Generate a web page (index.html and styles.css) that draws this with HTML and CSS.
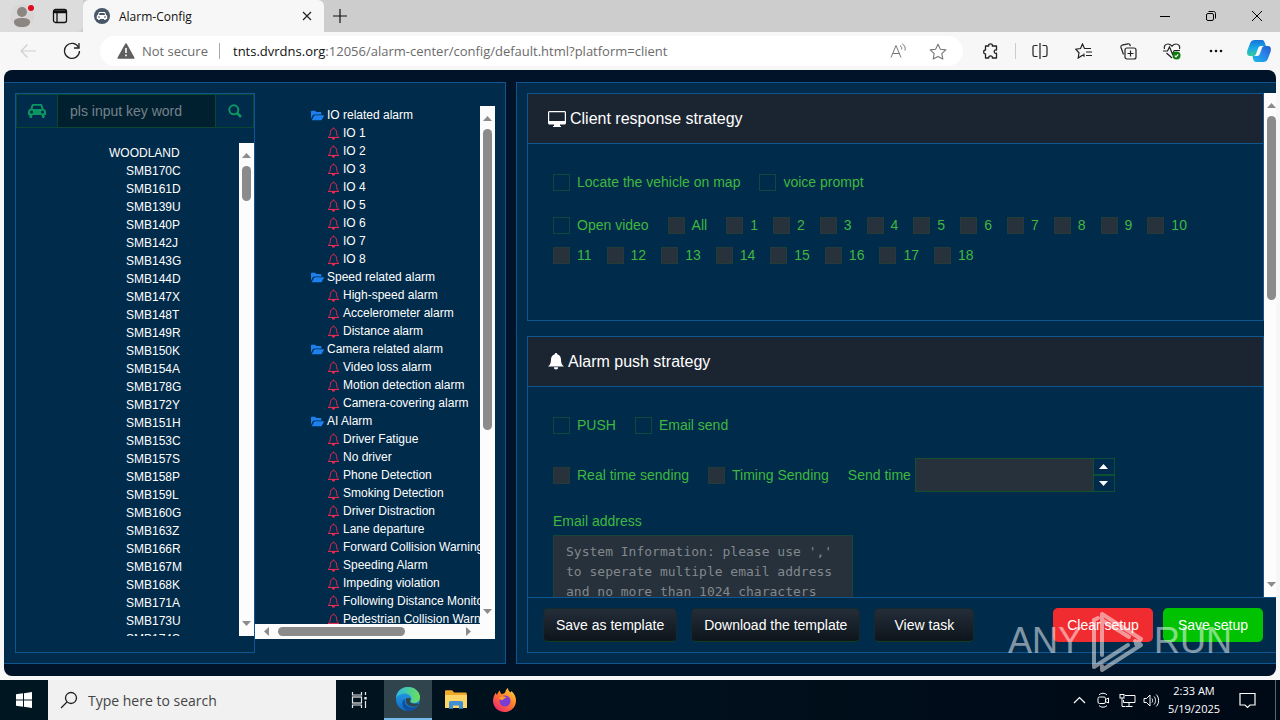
FILE: index.html
```html
<!DOCTYPE html>
<html lang="en">
<head>
  <meta charset="UTF-8">
  <meta name="viewport" content="width=device-width, initial-scale=1.0">
  <title>Alarm-Config</title>
  <link rel="stylesheet" href="styles.css">
</head>
<body>
  <!-- shared icons -->
  <svg class="sprite" width="0" height="0">
    <symbol id="bell" viewBox="0 0 13 13"><path d="M1.2 10.4h10.6c-1.7-1.2-2-2.7-2.2-5C9.400 3.100 8.300 1.700 6.500 1.700S3.600 3.100 3.400 5.400c-.2 2.300-.5 3.800-2.200 5z" fill="none" stroke="currentColor"/><path d="M6.500.4v1.200M1 10.500h11" stroke="currentColor" stroke-width="1.200"/><path d="M4.800 11h3.400a1.700 1.700 0 0 1-3.400 0z" fill="currentColor"/></symbol>
    <symbol id="folder" viewBox="0 0 14 12"><path d="M0 9.500V1.800C0 1.200.5.800 1 .8h3.500l1.200 1.500h4.500c.6 0 1 .4 1 1v1.500H3.600c-.7 0-1.300.3-1.700.9z" fill="currentColor"/><path d="M.8 11 3.200 6.400c.2-.4.5-.6 1-.6h9.300c.4 0 .6.300.4.700l-2.100 3.900c-.2.400-.5.600-1 .6z" fill="currentColor"/></symbol>
    <symbol id="up" viewBox="0 0 9 5"><path d="M4.500 0 9 5H0z" fill="currentColor"/></symbol>
    <symbol id="down" viewBox="0 0 9 5"><path d="M4.500 5 9 0H0z" fill="currentColor"/></symbol>
  </svg>

  <header class="browser">
    <div class="tab-strip">
      <div class="strip-left">
        <button class="avatar" aria-label="Profile">
          <svg width="24" height="24" viewBox="0 0 24 24"><circle cx="12" cy="12" r="12" fill="#d9d7d5"/><circle cx="12" cy="8" r="5" fill="#8b8682"/><path d="M4 18c0-3 3-4 8-4s8 1 8 4-3 5-8 5-8-2-8-5z" fill="#8b8682"/></svg>
          <span class="dot"></span>
        </button>
        <button aria-label="Tab actions">
          <svg width="16" height="16" viewBox="0 0 16 16" fill="none" stroke="#111" stroke-width="1.300"><rect x="1.500" y="1.500" width="13" height="13" rx="2"/><path d="M1.500 3h13M1.500 4.500h13M5 5v9.500"/></svg>
        </button>
      </div>
      <div class="tab">
        <svg width="16" height="16" viewBox="0 0 16 16"><circle cx="8" cy="8" r="8" fill="#485768"/><path d="M5 4h6l1.200 3 1 .8v3.200h-1.400v1h-1.600v-1H5.800v1H4.200v-1H2.800V7.800l1-.8z" fill="#fff"/><path d="M5.600 5h4.800l.7 2H4.900z" fill="#485768"/><path d="M4 9h2M10 9h2" stroke="#485768"/></svg>
        <span class="tab-title">Alarm-Config</span>
        <button class="tab-close" aria-label="Close tab"><svg width="10" height="10" viewBox="0 0 10 10" stroke="#222" stroke-width="1.200"><path d="m1 1 8 8M9 1 1 9"/></svg></button>
      </div>
      <button class="new-tab" aria-label="New tab"><svg width="14" height="14" viewBox="0 0 14 14" stroke="#111" stroke-width="1.200"><path d="M7 0v14M0 7h14"/></svg></button>
      <div class="window-controls">
        <button aria-label="Minimize"><svg width="12" height="12" viewBox="0 0 12 12" stroke="#000"><path d="M1 6.500h10"/></svg></button>
        <button aria-label="Restore"><svg width="12" height="12" viewBox="0 0 12 12" fill="none" stroke="#000"><rect x="1.500" y="3.500" width="7" height="7" rx="1.500"/><path d="M3.500 1.500h5c1.300 0 2 .7 2 2v5"/></svg></button>
        <button aria-label="Close"><svg width="12" height="12" viewBox="0 0 12 12" stroke="#000"><path d="m1 1 10 10M11 1 1 11"/></svg></button>
      </div>
    </div>

    <div class="toolbar">
      <button class="tool" aria-label="Back"><svg width="18" height="16" viewBox="0 0 18 16" fill="none" stroke="#cfcfcf" stroke-width="1.200"><path d="M17 8H2M8.500 1.500 2 8l6.500 6.500"/></svg></button>
      <button class="tool" aria-label="Refresh"><svg width="18" height="18" viewBox="0 0 18 18" fill="none" stroke="#222" stroke-width="1.300"><path d="M15.700 5.500A7.500 7.500 0 1 0 16.500 9"/><path d="M16 1v5h-5"/></svg></button>
      <div class="address">
        <svg width="18" height="16" viewBox="0 0 18 16"><path d="M8.200.8c.4-.7 1.200-.7 1.600 0l7.600 13.600c.4.700 0 1.400-.8 1.400H1.400c-.8 0-1.200-.7-.8-1.400z" fill="#5f5f5f"/><path d="M9 5v5M9 11.500v1.800" stroke="#fff" stroke-width="1.600"/></svg>
        <span class="not-secure">Not secure</span>
        <span class="url"><b>tnts.dvrdns.org</b>:12056/alarm-center/config/default.html?platform=client</span>
        <button class="in-address" aria-label="Read aloud"><svg width="17" height="16" viewBox="0 0 17 16" fill="none" stroke="#777"><path d="m1 14.500 5-12 5 12M2.800 10.500h6.400M10 2.500c1.500 1 2 2.500 1.600 4M12.200.8c2.500 1.500 3.500 4 2.800 6.700"/></svg></button>
        <button class="in-address" aria-label="Add to favorites"><svg width="18" height="17" viewBox="0 0 18 17" fill="none" stroke="#777" stroke-width="1.100"><path d="m9 1.200 2.400 5 5.400.7-4 3.800 1 5.300L9 13.400 4.200 16l1-5.300-4-3.800 5.400-.7z" stroke-linejoin="round"/></svg></button>
      </div>
      <button class="tool" aria-label="Extensions"><svg width="16" height="17" viewBox="0 0 16 17" fill="none" stroke="#222" stroke-width="1.300" stroke-linejoin="round"><path d="M2.500 3h3.200C5.300 1.500 6.500.8 7.500.8s2.200.7 1.800 2.200h4.200v4c-1.500-.4-2.300.5-2.300 1.600s.8 2 2.300 1.600V15H9.300c.4-1.200-.6-2.200-1.700-2.200S5.400 13.800 5.800 15H2.500v-4.200C1.200 11 .7 9.900.7 8.900S1.200 6.800 2.500 7z"/></svg></button>
      <span class="tool-divider"></span>
      <button class="tool" aria-label="Split screen"><svg width="16" height="16" viewBox="0 0 16 16" fill="none" stroke="#222" stroke-width="1.200"><path d="M5.500 2.500H2.700c-1 0-1.700.7-1.700 1.700v7.600c0 1 .7 1.700 1.700 1.700h2.800M8 0v16M10.500 2.500h2.800c1 0 1.700.7 1.700 1.700v7.600c0 1-.7 1.700-1.700 1.700h-2.800"/></svg></button>
      <button class="tool" aria-label="Favorites"><svg width="18" height="16" viewBox="0 0 18 16" fill="none" stroke="#222" stroke-width="1.200"><path d="M9 10.500V13l-1.500-.8L3.200 15 4 9.800.8 6.200l4.700-.7L7.500 1l2 4.500H16M11 9h6M11 12.500h6"/></svg></button>
      <button class="tool" aria-label="Collections"><svg width="17" height="17" viewBox="0 0 17 17" fill="none" stroke="#222" stroke-width="1.200"><rect x="5" y="5" width="11" height="11" rx="2"/><path d="M10.500 7.500v6M7.500 10.500h6M3.500 11.500 1 4.500C.7 3.300 1 2.500 2 2.200L8 .8c1-.2 1.800.3 2 1.200l.3 1.200"/></svg></button>
      <button class="tool" aria-label="Browser essentials"><svg width="18" height="17" viewBox="0 0 18 17" fill="none" stroke="#222" stroke-width="1.200"><path d="M1.500 6C.5 3 2.500 1 5 1c2 0 3 1 4 2.200C10 2 11 1 13 1c2.500 0 4.500 2 3.500 5M3.500 10 9 15"/><path d="M0 8h4.500l2-4 3 7 1.800-3.500H17"/><circle cx="13.500" cy="12.500" r="4" fill="#107c10" stroke="none"/><path d="m11.800 12.600 1.200 1.200 2.200-2.400" stroke="#fff"/></svg></button>
      <button class="tool" aria-label="Settings and more"><svg width="14" height="4" viewBox="0 0 14 4" fill="#111"><circle cx="2" cy="2" r="1.300"/><circle cx="7" cy="2" r="1.300"/><circle cx="12" cy="2" r="1.300"/></svg></button>
      <button class="tool" aria-label="Copilot"><svg width="24" height="22" viewBox="0 0 24 22">
        <defs>
          <linearGradient id="cp1" x1="0" y1="0" x2="0" y2="1"><stop offset="0" stop-color="#1673d8"/><stop offset=".5" stop-color="#18a8e6"/><stop offset="1" stop-color="#35c9a0"/></linearGradient>
          <linearGradient id="cp2" x1="0" y1="1" x2="1" y2="0"><stop offset="0" stop-color="#19bde9"/><stop offset=".6" stop-color="#2a7fe8"/><stop offset="1" stop-color="#205cc8"/></linearGradient>
        </defs>
        <path d="M8 0h7c2 0 2.500 2 3 3.500L19 6h-5c-2 0-2.500 1-3 2.500L9 14c-.5 1.500-1.500 2-3 2H3c-3 0-3.400-3-2.500-6L3 3.500C3.800 1 5.500 0 8 0z" fill="url(#cp1)"/>
        <path d="M16 22H9c-2 0-2.500-2-3-3.500L5.500 16H10c2 0 2.500-1 3-2.500L15 8c.5-1.500 1.500-2 3-2h3c3 0 3.400 3 2.500 6L21 18.500C20.200 21 18.500 22 16 22z" fill="url(#cp2)"/>
      </svg></button>
    </div>
  </header>

  <main class="page">
    <section class="panel vehicles-panel">
      <div class="vehicle-box">
        <form class="search">
          <span class="search-icon"><svg width="18" height="14" viewBox="0 0 18 14"><path d="M5 0h8c.7 0 1.200.4 1.400 1l1.200 4C17 5.300 18 6.300 18 7.700V11h-1.300v1.500c0 2-3 2-3 0V11H4.300v1.500c0 2-3 2-3 0V11H0V7.700C0 6.300 1 5.300 2.400 5l1.200-4C3.800.4 4.300 0 5 0zm.4 1.800L4.500 5h9l-.9-3.200zM3.500 6.500a1.500 1.500 0 1 0 0 3 1.500 1.500 0 0 0 0-3zm11 0a1.500 1.500 0 1 0 0 3 1.500 1.500 0 0 0 0-3z" fill="currentColor" fill-rule="evenodd"/></svg></span>
          <input type="text" placeholder="pls input key word" aria-label="Key word">
          <button type="button" aria-label="Search"><svg width="14" height="14" viewBox="0 0 14 14" fill="none" stroke="currentColor"><circle cx="5.800" cy="5.800" r="4.500" stroke-width="2"/><path d="m9 9 4 4" stroke-width="2.600"/></svg></button>
        </form>
        <div class="vehicle-scroll">
          <ul class="vehicle-list">
            <li class="fleet">WOODLAND</li>
            <li>SMB170C</li>
            <li>SMB161D</li>
            <li>SMB139U</li>
            <li>SMB140P</li>
            <li>SMB142J</li>
            <li>SMB143G</li>
            <li>SMB144D</li>
            <li>SMB147X</li>
            <li>SMB148T</li>
            <li>SMB149R</li>
            <li>SMB150K</li>
            <li>SMB154A</li>
            <li>SMB178G</li>
            <li>SMB172Y</li>
            <li>SMB151H</li>
            <li>SMB153C</li>
            <li>SMB157S</li>
            <li>SMB158P</li>
            <li>SMB159L</li>
            <li>SMB160G</li>
            <li>SMB163Z</li>
            <li>SMB166R</li>
            <li>SMB167M</li>
            <li>SMB168K</li>
            <li>SMB171A</li>
            <li>SMB173U</li>
            <li>SMB174S</li>
          </ul>
          <div class="scrollbar"><svg class="arrow"><use href="#up"/></svg><div class="track"><div class="thumb thumb-vehicles"></div></div><svg class="arrow"><use href="#down"/></svg></div>
        </div>
      </div>

      <div class="alarm-tree">
        <div class="tree-view">
          <ul class="tree">
            <li><svg class="folder"><use href="#folder"/></svg>IO related alarm
              <ul>
                <li><svg class="bell"><use href="#bell"/></svg>IO 1</li>
                <li><svg class="bell"><use href="#bell"/></svg>IO 2</li>
                <li><svg class="bell"><use href="#bell"/></svg>IO 3</li>
                <li><svg class="bell"><use href="#bell"/></svg>IO 4</li>
                <li><svg class="bell"><use href="#bell"/></svg>IO 5</li>
                <li><svg class="bell"><use href="#bell"/></svg>IO 6</li>
                <li><svg class="bell"><use href="#bell"/></svg>IO 7</li>
                <li><svg class="bell"><use href="#bell"/></svg>IO 8</li>
              </ul>
            </li>
            <li><svg class="folder"><use href="#folder"/></svg>Speed related alarm
              <ul>
                <li><svg class="bell"><use href="#bell"/></svg>High-speed alarm</li>
                <li><svg class="bell"><use href="#bell"/></svg>Accelerometer alarm</li>
                <li><svg class="bell"><use href="#bell"/></svg>Distance alarm</li>
              </ul>
            </li>
            <li><svg class="folder"><use href="#folder"/></svg>Camera related alarm
              <ul>
                <li><svg class="bell"><use href="#bell"/></svg>Video loss alarm</li>
                <li><svg class="bell"><use href="#bell"/></svg>Motion detection alarm</li>
                <li><svg class="bell"><use href="#bell"/></svg>Camera-covering alarm</li>
              </ul>
            </li>
            <li><svg class="folder"><use href="#folder"/></svg>AI Alarm
              <ul>
                <li><svg class="bell"><use href="#bell"/></svg>Driver Fatigue</li>
                <li><svg class="bell"><use href="#bell"/></svg>No driver</li>
                <li><svg class="bell"><use href="#bell"/></svg>Phone Detection</li>
                <li><svg class="bell"><use href="#bell"/></svg>Smoking Detection</li>
                <li><svg class="bell"><use href="#bell"/></svg>Driver Distraction</li>
                <li><svg class="bell"><use href="#bell"/></svg>Lane departure</li>
                <li><svg class="bell"><use href="#bell"/></svg>Forward Collision Warning</li>
                <li><svg class="bell"><use href="#bell"/></svg>Speeding Alarm</li>
                <li><svg class="bell"><use href="#bell"/></svg>Impeding violation</li>
                <li><svg class="bell"><use href="#bell"/></svg>Following Distance Monitoring</li>
                <li><svg class="bell"><use href="#bell"/></svg>Pedestrian Collision Warning</li>
              </ul>
            </li>
          </ul>
          <div class="scrollbar"><svg class="arrow"><use href="#up"/></svg><div class="track"><div class="thumb thumb-tree"></div></div><svg class="arrow"><use href="#down"/></svg></div>
        </div>
        <div class="scrollbar-h">
          <svg width="5" height="9" viewBox="0 0 5 9"><path d="M0 4.500 5 0v9z" fill="currentColor"/></svg>
          <div class="track"><div class="thumb"></div></div>
          <svg width="5" height="9" viewBox="0 0 5 9"><path d="M5 4.500 0 0v9z" fill="currentColor"/></svg>
        </div>
      </div>
    </section>

    <section class="panel setup-panel">
      <div class="setup-scroll">
        <div class="cards">
          <div class="card client-card">
            <h3><svg width="18" height="16" viewBox="0 0 18 16"><path d="M1.500 0h15c.8 0 1.500.7 1.500 1.500V12c0 .8-.7 1.500-1.500 1.500H12V15h1v1H5v-1h1v-1.500H1.500C.7 13.500 0 12.800 0 12V1.500C0 .7.7 0 1.500 0zM1.200 1.200V10h15.600V1.200z" fill="#fff" fill-rule="evenodd"/></svg>Client response strategy</h3>
            <div class="card-body">
              <div class="row">
                <label><input type="checkbox">Locate the vehicle on map</label>
                <label><input type="checkbox">voice prompt</label>
              </div>
              <div class="row channels">
                <label class="wide"><input type="checkbox">Open video</label>
                <label class="wide"><input type="checkbox" disabled>All</label>
                <label><input type="checkbox" disabled>1</label>
                <label><input type="checkbox" disabled>2</label>
                <label><input type="checkbox" disabled>3</label>
                <label><input type="checkbox" disabled>4</label>
                <label><input type="checkbox" disabled>5</label>
                <label><input type="checkbox" disabled>6</label>
                <label><input type="checkbox" disabled>7</label>
                <label><input type="checkbox" disabled>8</label>
                <label><input type="checkbox" disabled>9</label>
                <label><input type="checkbox" disabled>10</label>
                <label><input type="checkbox" disabled>11</label>
                <label><input type="checkbox" disabled>12</label>
                <label><input type="checkbox" disabled>13</label>
                <label><input type="checkbox" disabled>14</label>
                <label><input type="checkbox" disabled>15</label>
                <label><input type="checkbox" disabled>16</label>
                <label><input type="checkbox" disabled>17</label>
                <label><input type="checkbox" disabled>18</label>
              </div>
            </div>
          </div>

          <div class="card">
            <h3><svg width="16" height="17" viewBox="0 0 16 17"><path d="M8 0c.8 0 1.200.5 1.200 1.300C11.700 1.900 13 4 13 6.500c0 3.500.8 5.500 3 7H0c2.200-1.500 3-3.500 3-7C3 4 4.300 1.900 6.800 1.300 6.800.5 7.200 0 8 0zM5.800 14.200h4.400a2.200 2.200 0 0 1-4.400 0z" fill="#fff"/></svg>Alarm push strategy</h3>
            <div class="card-body">
              <div class="row">
                <label><input type="checkbox">PUSH</label>
                <label><input type="checkbox">Email send</label>
              </div>
              <div class="row send-row">
                <label><input type="checkbox" disabled>Real time sending</label>
                <label><input type="checkbox" disabled>Timing Sending</label>
                <div class="send-time">
                  <label for="sendTime">Send time</label>
                  <input type="text" id="sendTime" disabled>
                  <div class="spin">
                    <button aria-label="Later"><svg width="9" height="5"><use href="#up"/></svg></button>
                    <button aria-label="Earlier"><svg width="9" height="5"><use href="#down"/></svg></button>
                  </div>
                </div>
              </div>
              <label class="email-label" for="email">Email address</label>
              <textarea id="email" disabled placeholder="System Information: please use ',' to seperate multiple email address and no more than 1024 characters"></textarea>
            </div>
          </div>
        </div>
        <div class="scrollbar edge"><svg class="arrow"><use href="#up"/></svg><div class="track"><div class="thumb thumb-setup"></div></div><svg class="arrow"><use href="#down"/></svg></div>
      </div>
      <div class="actions">
        <button class="btn">Save as template</button>
        <button class="btn">Download the template</button>
        <button class="btn">View task</button>
        <button class="btn btn-clear">Clear setup</button>
        <button class="btn btn-save">Save setup</button>
      </div>
    </section>
  </main>

  <footer class="taskbar">
    <button class="task" aria-label="Start"><svg width="16" height="16" viewBox="0 0 16 16" fill="#fff"><path d="M0 2.300 7 1.300v6.300H0zM8 1.200 16 0v7.600H8zM0 8.500h7v6.300l-7-1zM8 8.500h8V16l-8-1.200z"/></svg></button>
    <label class="task-search">
      <svg width="18" height="18" viewBox="0 0 18 18" fill="none" stroke="#222" stroke-width="1.300"><circle cx="11" cy="7" r="5.500"/><path d="m7 11-6 6"/></svg>
      <input type="text" placeholder="Type here to search">
    </label>
    <button class="task" aria-label="Task view"><svg width="18" height="16" viewBox="0 0 18 16" fill="none" stroke="#e8e8e8" stroke-width="1.200"><path d="M1.500 0v3h9V0M1.500 16v-3h9v3"/><rect x="1.500" y="5" width="9" height="6"/><path d="M14.500 0v3M14.500 9v7"/><path d="M14.500 5v2.500" stroke-width="2.400"/></svg></button>
    <button class="task active" aria-label="Edge"><svg width="24" height="24" viewBox="0 0 24 24">
      <defs>
        <linearGradient id="eg1" x1="0" y1="0" x2="1" y2="0"><stop offset="0" stop-color="#2bb8e8"/><stop offset="1" stop-color="#6be05a"/></linearGradient>
        <linearGradient id="eg2" x1="0" y1="0" x2="0" y2="1"><stop offset="0" stop-color="#2aa5e6"/><stop offset="1" stop-color="#0c6ac6"/></linearGradient>
      </defs>
      <circle cx="12" cy="12" r="12" fill="url(#eg2)"/>
      <path d="M0 11C.5 4.500 5.500 0 12 0c7 0 12 5 12 10 0 4-3 6-6 6-2.500 0-4-1-3.500-2 .8-1.200 1-2 .8-3C14.500 8 11 6 7.500 6.500 4 7 1 9 0 11z" fill="url(#eg1)"/>
      <path d="M9 12c-1.500 5 3 8.500 7.500 8.500 2.500 0 4.700-1 6-2.500C20.500 22 16.500 24 12.500 24 8 23 6 19 6.500 15.500 7 13 8 12.500 9 12z" fill="#124f9c"/>
      <path d="M10 11.500c1-.8 3.500-.8 4.800.3-.1 1-.7 1.500-.9 2.200-.3 2 3.100 3.200 6.600 2.500.8 0 2 0 2 1-1.500 1.500-3.500 2-5.500 2-4.500 0-8-3-7-8z" fill="#30444e"/>
    </svg></button>
    <button class="task" aria-label="File Explorer"><svg width="22" height="20" viewBox="0 0 22 20"><path d="M0 1.500C0 .7.500.2 1.200.2h6L9 2.500h11.500c.6 0 1.300.5 1.300 1.200V17H0z" fill="#f0a92b"/><path d="M0 5h22v13H0z" fill="#ffd567"/><path d="M4 18.800v-6c0-1 .6-1.800 1.700-1.800h10.600c1 0 1.700.8 1.700 1.800v6h-4v-3.300H8v3.300z" fill="#3f8fd2"/></svg></button>
    <button class="task" aria-label="Firefox"><svg width="23" height="24" viewBox="0 0 23 24">
      <defs><linearGradient id="ff" x1="1" y1="0" x2=".2" y2="1"><stop offset="0" stop-color="#ffe23d"/><stop offset=".5" stop-color="#ff7a2a"/><stop offset="1" stop-color="#f0256e"/></linearGradient></defs>
      <path d="M11.500 24C5 24 0 19 0 12.800 0 9 1.500 7 2.500 4.800L4 7c.5-2 1.500-3.500 3-4.500 0 1.500.5 2.500 1.500 3.500C11 6 12 5 12.500 3.500c.3-1.500 1-2.700 2.500-3.500 0 2 1 3 2.500 4.500l1-1.500C21.500 6 23 9 23 12.500 23 19 18 24 11.500 24z" fill="url(#ff)"/>
      <circle cx="12" cy="13" r="5.500" fill="#7a3bd6"/><path d="M6 10c2-2.500 6-2.500 7.500 0-1.500 0-3 .5-3.500 2-1.500.5-3-.5-4-2z" fill="#ff9a2a"/>
    </svg></button>

    <div class="tray">
      <button aria-label="Hidden icons"><svg width="13" height="8" viewBox="0 0 13 8" fill="none" stroke="#fff" stroke-width="1.200"><path d="m1 7 5.500-5.500L12 7"/></svg></button>
      <button aria-label="Meet now"><svg width="13" height="16" viewBox="0 0 13 16" fill="none" stroke="#fff"><rect x="1" y="5" width="7.500" height="6.500" rx="1.500"/><path d="M8.500 7.500 11.500 6v5l-3-1.500M2 3C4 .7 8 .7 10 3M2 13.500c2 2.200 6 2.200 8 0"/></svg></button>
      <button aria-label="Network"><svg width="17" height="15" viewBox="0 0 17 15" fill="none" stroke="#fff"><path d="M6 2.500h10v7H4.500V7M10 9.500v3.500M6.500 13.500h7"/><rect x="1" y="1.500" width="4" height="3.500"/><path d="M3 5v8.500h3"/></svg></button>
      <button aria-label="Volume"><svg width="17" height="15" viewBox="0 0 17 15" fill="none" stroke="#fff"><path d="M1 5.500h2.500L7 2v11L3.500 9.500H1zM9 5.500c.8 1 .8 3 0 4M11 3.500c2 2 2 6 0 8M13.200 1.500c3.200 3 3.200 9 0 12"/></svg></button>
      <div class="clock"><span>2:33 AM</span><span>5/19/2025</span></div>
      <button class="notify" aria-label="Notifications"><svg width="17" height="17" viewBox="0 0 17 17" fill="none" stroke="#fff" stroke-width="1.200"><path d="M1 1.500h15v11.500h-5L8.500 15.500 6 13H1z"/></svg></button>
      <span class="show-desktop"></span>
    </div>
  </footer>

  <div class="watermark">
    <span>ANY</span>
    <svg width="56" height="62" viewBox="0 0 56 62" fill="none" stroke="currentColor" stroke-width="4" stroke-linejoin="round" stroke-linecap="round"><path d="M12 45V4l39 25-5 5"/><path d="M4 10v47l34-22"/><path d="M8 8 4 10M12 56v4l39-25-6-4"/><path d="M12 10l27 17"/></svg>
    <span>RUN</span>
  </div>
</body>
</html>
```
FILE: styles.css
```css
* {
  box-sizing: border-box;
}
body {
  margin: 0;
  height: 100vh;
  display: flex;
  flex-direction: column;
  overflow: hidden;
  background: #f7f7f7;
  font-family: "Liberation Sans", Arial, sans-serif;
}
button {
  padding: 0;
  border: 0;
  background: none;
  font-family: inherit;
  display: flex;
  align-items: center;
  justify-content: center;
}
ul {
  margin: 0;
  padding: 0;
  list-style: none;
}
.sprite {
  position: absolute;
}

/* browser window */
.browser,
.taskbar {
  flex: none;
  font-family: "Open Sans", "Noto Sans", sans-serif;
}
.tab-strip {
  display: flex;
  height: 32px;
  background: #cdcdcd;
}
.strip-left {
  display: flex;
  align-items: center;
  gap: 18px;
  width: 83px;
  padding-left: 10px;
  background: #dcdcdc;
  border-radius: 0 0 6px 0;
}
.avatar {
  position: relative;
}
.dot {
  position: absolute;
  top: 1px;
  right: 0;
  width: 6px;
  height: 6px;
  border-radius: 50%;
  background: #e00b1c;
}
.tab {
  display: flex;
  align-items: center;
  width: 241px;
  padding: 0 10px 0 11px;
  background: #f7f7f7;
  border-radius: 6px 6px 0 0;
}
.tab-title {
  flex: 1;
  margin-left: 9px;
  font-size: 12px;
  color: #111;
}
.tab-close {
  width: 14px;
}
.new-tab {
  width: 32px;
}
.window-controls {
  display: flex;
  margin-left: auto;
}
.window-controls button {
  width: 46px;
}
.toolbar {
  display: flex;
  align-items: center;
  height: 38px;
  padding-left: 6px;
  background: #f7f7f7;
}
.tool {
  flex: none;
  width: 44px;
  height: 38px;
}
.tool:last-child {
  width: 42px;
}
.tool-divider {
  width: 1px;
  height: 16px;
  margin: 0 2px;
  background: #ccc;
}
.address {
  flex: 1;
  display: flex;
  align-items: center;
  height: 30px;
  margin: 0 6px;
  padding: 0 5px 0 17px;
  border-radius: 15px;
  background: #fff;
  font-size: 13px;
  color: #6b6b6b;
}
.not-secure {
  width: 78px;
  margin: 0 13px 0 7px;
  border-right: 1px solid #aaa;
  line-height: 16px;
}
.url {
  flex: 1;
  white-space: nowrap;
}
.url b {
  font-weight: normal;
  color: #111;
}
.in-address {
  width: 40px;
}

/* alarm page */
.page {
  flex: 1;
  min-height: 0;
  display: flex;
  gap: 10px;
  margin: 0 4px 4px;
  padding: 12px 0;
  border-radius: 8px;
  background: #001328;
  overflow: hidden;
}
.panel {
  border: 1px solid #0f5590;
  background: #002b4b;
  padding: 10px;
}
.vehicles-panel {
  flex: none;
  display: flex;
  width: 502px;
  border-left: 0;
  padding-left: 11px;
}
.vehicle-box {
  display: flex;
  flex-direction: column;
  width: 240px;
  padding-bottom: 16px;
  border: 1px solid #0f5590;
}
.search {
  flex: none;
  display: flex;
  height: 34px;
  color: #0c9462;
}
.search-icon,
.search button {
  display: flex;
  align-items: center;
  justify-content: center;
  width: 42px;
  border: 1px solid #0a4630;
  color: inherit;
}
.search button {
  width: 39px;
}
.search input {
  flex: 1;
  min-width: 0;
  padding: 0 12px;
  border: 1px solid #0a4630;
  border-width: 1px 0;
  background: #01202f;
  font-family: inherit;
  font-size: 14px;
}
.search input::placeholder {
  color: #75818b;
}
.vehicle-scroll {
  flex: 1;
  min-height: 0;
  display: flex;
  margin-top: 15px;
}
.vehicle-list {
  flex: 1;
  overflow: hidden;
  padding-top: 1px;
  font-size: 12px;
  line-height: 18px;
  color: #fff;
}
.vehicle-list li {
  padding-left: 110px;
}
.vehicle-list .fleet {
  padding-left: 93px;
}
.alarm-tree {
  flex: 1;
  min-width: 0;
  display: flex;
  flex-direction: column;
  padding: 13px 0 14px;
}
.tree-view {
  flex: 1;
  min-height: 0;
  display: flex;
}
.tree {
  flex: 1;
  min-width: 0;
  overflow: hidden;
  padding-left: 56px;
  font-size: 12px;
  line-height: 18px;
  color: #fff;
  white-space: nowrap;
}
.tree ul {
  padding-left: 16px;
}
.folder,
.bell {
  width: 13px;
  height: 13px;
  margin-right: 3px;
  vertical-align: -3px;
  color: #1e80ee;
}
.bell {
  color: #e5294f;
}

/* scrollbars */
.scrollbar {
  flex: none;
  display: flex;
  flex-direction: column;
  align-items: center;
  width: 15px;
  padding: 10px 0;
  background: #fcfcfc;
  color: #8b8b8b;
}
.arrow {
  flex: none;
  width: 9px;
  height: 5px;
}
.scrollbar .track {
  flex: 1;
  padding-top: 8px;
}
.thumb {
  border-radius: 5px;
  background: #8b8b8b;
}
.scrollbar .thumb {
  width: 9px;
}
.thumb-vehicles {
  height: 35px;
}
.thumb-tree {
  height: 301px;
}
.thumb-setup {
  height: 184px;
}
.edge {
  width: 12px;
  padding-left: 3px;
}
.scrollbar-h {
  flex: none;
  display: flex;
  align-items: center;
  height: 15px;
  padding: 0 24px 0 9px;
  background: #fcfcfc;
  color: #8b8b8b;
}
.scrollbar-h .track {
  flex: 1;
  padding-left: 9px;
}
.scrollbar-h .thumb {
  width: 127px;
  height: 9px;
}

/* setup side */
.setup-panel {
  flex: 1;
  min-width: 0;
  display: flex;
  flex-direction: column;
  border-right: 0;
  padding-right: 0;
}
.setup-scroll {
  flex: 1;
  min-height: 0;
  display: flex;
}
.cards {
  flex: 1;
  overflow: hidden;
}
.card {
  margin-bottom: 15px;
  border: 1px solid #0f5590;
}
.client-card {
  height: 228px;
}
.card h3 {
  display: flex;
  align-items: center;
  gap: 4px;
  height: 50px;
  margin: 0;
  padding-left: 20px;
  border-bottom: 1px solid #0f5590;
  background: #1b2531;
  font-size: 16px;
  font-weight: normal;
  color: #fff;
}
.card-body {
  padding: 27px 25px;
  font-size: 14px;
  color: #3fb83f;
}
.row {
  display: flex;
  flex-wrap: wrap;
  align-items: center;
  column-gap: 19px;
  line-height: 22px;
}
.row label {
  display: flex;
  align-items: center;
}
.channels {
  gap: 8px 15px;
  margin-top: 21px;
}
.channels .wide {
  margin-right: 4px;
}
input[type="checkbox"] {
  appearance: none;
  width: 17px;
  height: 17px;
  margin: 0 7px 0 0;
  border: 1px solid #0d4a3c;
}
input[type="checkbox"]:disabled {
  border-color: #233c38;
  background: #28323c;
}
.send-row {
  margin-top: 22px;
}
.send-time {
  display: flex;
  align-items: center;
}
.send-time input {
  width: 179px;
  height: 34px;
  margin-left: 4px;
  border: 1px solid #14502f;
  background: #26313b;
}
.spin button {
  width: 21px;
  height: 17px;
  border: 1px solid #0b5033;
  border-left: 0;
  color: #fff;
}
.email-label {
  display: block;
  margin-top: 18px;
  line-height: 22px;
}
textarea {
  display: block;
  width: 300px;
  height: 84px;
  margin-top: 3px;
  padding: 6px 12px;
  border: 1px solid #1c4436;
  background: #26313b;
  resize: none;
  overflow: hidden;
  font-family: "DejaVu Sans Mono", monospace;
  font-size: 13px;
  line-height: 20px;
}
textarea::placeholder {
  color: #82888d;
}
.actions {
  flex: none;
  display: flex;
  align-items: center;
  gap: 14px;
  height: 56px;
  padding: 0 13px 0 15px;
  border: 1px solid #0f5590;
  border-right: 0;
}
.btn {
  min-width: 100px;
  height: 34px;
  padding: 0 12px;
  border: 1px solid #142a30;
  border-bottom-color: #114023;
  border-radius: 5px;
  background: linear-gradient(#242e39, #0d141b);
  font-size: 14px;
  color: #fff;
}
.btn-clear {
  margin-left: auto;
  margin-right: -4px;
  border: 0;
  background: #f02c30;
}
.btn-save {
  border: 0;
  background: #00c200;
}

/* windows taskbar */
.taskbar {
  display: flex;
  height: 40px;
  background: linear-gradient(90deg, #001722, #000916);
}
.task {
  width: 48px;
}
.task.active {
  background: #30444e;
  border-bottom: 2px solid #76b9ed;
}
.task-search {
  display: flex;
  align-items: center;
  gap: 10px;
  width: 288px;
  padding-left: 12px;
  background: #f1f1f1;
}
.task-search input {
  flex: 1;
  padding: 0;
  border: 0;
  background: none;
  font-family: inherit;
  font-size: 14px;
}
.task-search input::placeholder {
  color: #444;
}
.tray {
  display: flex;
  margin-left: auto;
  color: #fff;
}
.tray button {
  width: 24px;
}
.clock {
  display: flex;
  flex-direction: column;
  align-items: center;
  justify-content: center;
  width: 62px;
  font-size: 11px;
  line-height: 18px;
}
.tray .notify {
  width: 44px;
}
.show-desktop {
  width: 5px;
  margin-left: 6px;
  border-left: 1px solid #5d646c;
}

.watermark {
  position: absolute;
  right: 48px;
  bottom: 48px;
  display: flex;
  align-items: center;
  gap: 8px;
  font-family: "Liberation Sans Narrow", "Liberation Sans", sans-serif;
  font-size: 36px;
  color: #fff;
  opacity: 0.5;
  pointer-events: none;
}
```
